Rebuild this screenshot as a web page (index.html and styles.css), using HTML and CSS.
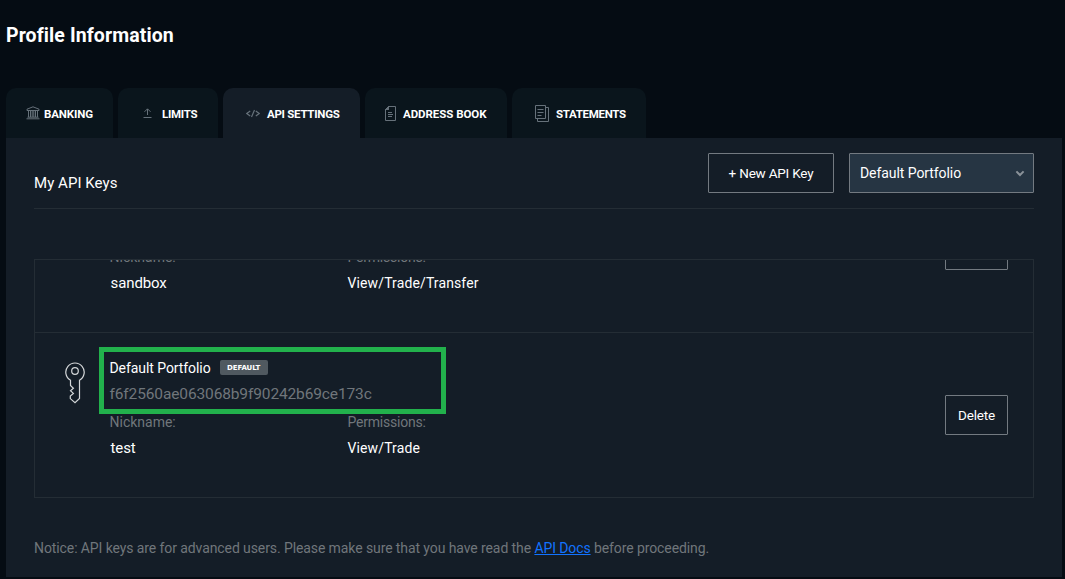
FILE: index.html
```html
<!DOCTYPE html>
<html lang="en">
<head>
<meta charset="utf-8">
<title>Profile Information</title>
<link rel="stylesheet" href="styles.css">
</head>
<body>
<main class="page">
  <h1 class="title"><span>Profile Information</span></h1>
  <nav class="tabs">
    <a class="tab tab-banking">
      <svg class="icon" width="14" height="14" viewBox="0 0 14 14"><path d="M1 4.5V3.2L7 .8l6 2.4v1.3zM2.5 5v6M4.5 5v6M6.2 5v6M7.8 5v6M9.5 5v6M11.5 5v6M1.5 11.2h11M.5 12.8h13"/></svg>
      <span class="label">BANKING</span>
    </a>
    <a class="tab tab-limits">
      <svg class="icon" width="9" height="10" viewBox="0 0 9 10"><path d="M4.5 7V1M1.5 3.8l3-3 3 3M.5 9.5h8"/></svg>
      <span class="label">LIMITS</span>
    </a>
    <a class="tab tab-api active">
      <svg class="icon code" width="14" height="9" viewBox="0 0 14 9"><path d="M4.2 2L.8 4.5 4.2 7M9.8 2l3.4 2.5L9.8 7M8.5 1l-3 7"/></svg>
      <span class="label">API SETTINGS</span>
    </a>
    <a class="tab tab-address">
      <svg class="icon" width="11" height="15" viewBox="0 0 11 15"><path d="M3.5.5h7v14H.5v-11zM.5 3.5h3v-3M3 6.5h4M3 8.5h5M3 10.5h4"/><path class="fold" d="M.5 3.5l3-3v3z"/></svg>
      <span class="label">ADDRESS BOOK</span>
    </a>
    <a class="tab tab-statements">
      <svg class="icon" width="14" height="17" viewBox="0 0 14 17"><path d="M.5.5h10v13H.5zM10.5 2.5h3v14h-11v-3M2.5 4.5h6M2.5 7.5h6M2.5 10.5h4"/></svg>
      <span class="label">STATEMENTS</span>
    </a>
  </nav>
  <section class="panel">
    <header class="panel-head">
      <h2 class="subtitle"><span>My API Keys</span></h2>
      <button class="button new-key"><span>+ New API Key</span></button>
      <div class="select"><span class="select-value">Default Portfolio</span>
        <svg width="10" height="7" viewBox="0 0 10 7"><path d="M1.4 1.4L5 5l3.6-3.6"/></svg>
      </div>
    </header>
    <div class="list">
      <article class="item first">
        <div class="key-icon"></div>
        <div class="info">
          <div class="name-row"></div>
          <div class="hash"></div>
          <div class="fields">
            <span class="field-label nick">Nickname:</span><span class="field-label perm">Permissions:</span>
            <span class="value nickname">sandbox</span><span class="value">View/Trade/Transfer</span>
          </div>
        </div>
        <div class="button delete"></div>
      </article>
      <article class="item">
        <svg class="key-icon" width="20" height="42" viewBox="0 0 20 42"><path d="M5.5 18.2A9.2 9.2 0 1 1 14.5 18.2V36.5L10 40.7 5.3 36.6V34L8.4 31.4 5.5 28.8 8.4 26.2 5.5 23.5z"/><circle cx="10" cy="9" r="3.3"/></svg>
        <div class="info">
          <div class="name-row"><span class="name">Default Portfolio</span><span class="badge"><span>DEFAULT</span></span></div>
          <div class="hash"><span>f6f2560ae063068b9f90242b69ce173c</span></div>
          <div class="fields">
            <span class="field-label nick">Nickname:</span><span class="field-label perm">Permissions:</span>
            <span class="value nickname">test</span><span class="value">View/Trade</span>
          </div>
        </div>
        <button class="button delete"><span>Delete</span></button>
      </article>
    </div>
    <p class="notice">Notice: API keys are for advanced users. Please make sure that you have read the <a class="link">API Docs</a> before proceeding.</p>
  </section>
  <div class="highlight"></div>
</main>
</body>
</html>
```
FILE: styles.css
```css
* { box-sizing: border-box; }
body { margin: 0; background: #050c13; color: #fff; font-family: Roboto, "Liberation Sans", sans-serif; font-size: 14px; }
.page { position: relative; width: 1065px; height: 579px; padding: 0 3px 0 6px; overflow: hidden; }
.title { margin: 0; height: 88px; padding-top: 23px; font-size: 19.5px; line-height: 25px; font-weight: 700; letter-spacing: .1px; white-space: nowrap; }
.tabs { display: flex; gap: 5px; height: 50px; }
.tab { display: flex; align-items: center; height: 50px; border-radius: 10px 10px 0 0; background: #0a151c; font-size: 11.5px; font-weight: 700; letter-spacing: -.27px; white-space: nowrap; }
.tab.active { background: #141d27; }
.label { line-height: 16px; padding-top: 2px; }
.icon { flex: none; fill: none; stroke: #66717a; stroke-width: 1; }
.icon .fold { fill: #66717a; }
.icon.code { stroke-width: 1.2; }
.tab-banking { width: 107px; padding-left: 20px; gap: 4px; letter-spacing: -.12px; }
.tab-limits { width: 100px; padding-left: 25px; gap: 10px; }
.tab-api { width: 137px; padding-left: 23px; gap: 7px; }
.tab-address { width: 142px; padding-left: 20px; gap: 7px; letter-spacing: -.05px; }
.tab-statements { width: 134px; padding-left: 23px; gap: 7px; letter-spacing: -.3px; }
.panel { height: 439px; padding: 15px 28px 0; background: #141d27; }
.panel-head { display: flex; align-items: flex-start; height: 56px; border-bottom: 1px solid #242d35; }
.subtitle { flex: 1; margin: 0; padding-top: 19px; font-size: 15px; line-height: 22px; font-weight: 400; letter-spacing: .05px; }
.button { height: 40px; padding: 0; border: 1px solid #737a81; border-radius: 1px; background: transparent; color: #fff; font: 400 13.5px/18px Roboto, sans-serif; letter-spacing: -.2px; text-align: center; white-space: nowrap; }
.new-key { width: 126px; margin-right: 15px; }
.select { display: flex; align-items: center; justify-content: space-between; width: 185px; height: 40px; padding: 0 8px 0 10px; border: 1px solid #737a81; border-radius: 1px; background: #263543; }
.select-value, .name { letter-spacing: -.07px; }
.select svg { fill: none; stroke: #8a9299; stroke-width: 2; }
.list { height: 239px; margin-top: 50px; border: 1px solid #242d35; overflow: hidden; }
.item { display: flex; height: 164px; padding: 0 25px 0 30px; }
.item.first { height: 165px; margin-top: -92px; border-bottom: 1px solid #242d35; }
.key-icon { flex: none; width: 20px; margin-top: 29px; fill: none; stroke: #d4d7d9; stroke-width: 1.2; }
.info { flex: 1; margin-left: 24.5px; padding-top: 25px; }
.name-row { display: flex; align-items: center; height: 20px; gap: 9px; }
.badge { display: flex; align-items: center; justify-content: center; width: 48px; height: 15px; margin-top: -1px; padding-top: 1px; border-radius: 2px; background: #505960; font: 700 7px/10px "DejaVu Sans", sans-serif; letter-spacing: -.05px; }
.hash { height: 32px; font-size: 15.5px; line-height: 32px; letter-spacing: -.13px; color: #70767b; }
.fields { display: grid; grid-template-columns: 238px 1fr; grid-template-rows: 24px 27px; align-items: center; justify-items: start; }
.field-label { color: #70767b; }
.perm { letter-spacing: -.22px; }
.value { font-size: 14px; letter-spacing: .12px; }
.nickname { font-size: 15px; letter-spacing: -.1px; padding-left: 1px; }
.delete { width: 63px; align-self: center; }
.notice { margin: 0; padding-top: 40px; line-height: 20px; letter-spacing: -.095px; color: #70767b; white-space: nowrap; }
.link { color: #1273ff; text-decoration: underline; }
.highlight { position: absolute; left: 99px; top: 347px; width: 347px; height: 67px; border: 5px solid #22b14c; }
```
